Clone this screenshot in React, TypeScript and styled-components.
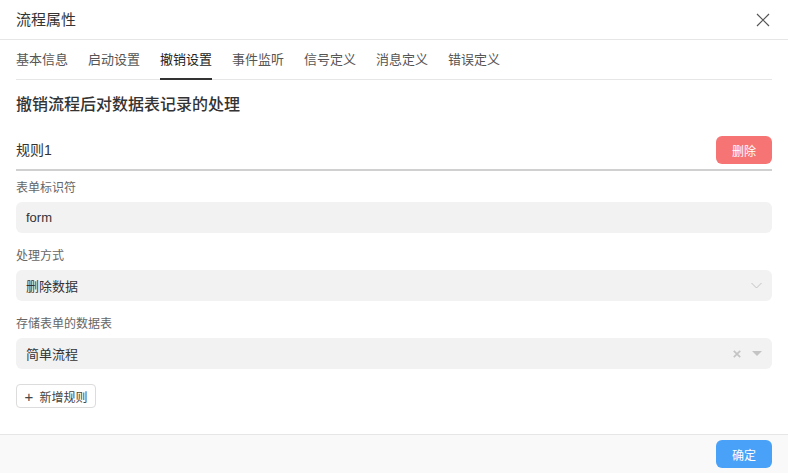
import React, { useState } from "react";
import styled, { createGlobalStyle } from "styled-components";

const GlobalStyle = createGlobalStyle`
  html, body {
    margin: 0;
    padding: 0;
    background: #ffffff;
  }
  body {
    font-family: "Liberation Sans", "Noto Sans CJK SC", sans-serif;
    color: #333333;
  }
`;

const TABS = ["基本信息", "启动设置", "撤销设置", "事件监听", "信号定义", "消息定义", "错误定义"];

const App = () => {
  const [active, setActive] = useState(2);

  return (
    <>
      <GlobalStyle />
      <Dialog>
        <Header>
          <Title>流程属性</Title>
          <CloseButton aria-label={"close"}>
            <svg width="14" height="14" viewBox="0 0 14 14">
              <path d="M1 1L13 13M13 1L1 13" stroke="#555" strokeWidth="1.2" fill="none" />
            </svg>
          </CloseButton>
        </Header>

        <TabBar>
          {TABS.map((label, index) => (
            <Tab key={label} $active={index === active} onClick={() => setActive(index)}>
              {label}
            </Tab>
          ))}
        </TabBar>

        <Body>
          <Heading>撤销流程后对数据表记录的处理</Heading>

          <RuleRow>
            <RuleName>规则1</RuleName>
            <Button $color={"#f67474"}>删除</Button>
          </RuleRow>

          <Field>
            <Label>表单标识符</Label>
            <InputBox>form</InputBox>
          </Field>

          <Field>
            <Label>处理方式</Label>
            <InputBox>
              删除数据
              <Suffix>
                <svg width="11" height="7" viewBox="0 0 11 7">
                  <path d="M0.5 1L5.5 6L10.5 1" stroke="#c2c2c2" strokeWidth="1" fill="none" />
                </svg>
              </Suffix>
            </InputBox>
          </Field>

          <Field>
            <Label>存储表单的数据表</Label>
            <InputBox>
              简单流程
              <Suffix $gap={11}>
                <svg width="8" height="8" viewBox="0 0 8 8">
                  <path d="M0.8 0.8L7.2 7.2M7.2 0.8L0.8 7.2" stroke="#c4c4c4" strokeWidth="1.7" fill="none" />
                </svg>
                <svg width="10" height="5" viewBox="0 0 10 5">
                  <path d="M0 0H10L5 5Z" fill="#c4c4c4" />
                </svg>
              </Suffix>
            </InputBox>
          </Field>

          <AddButton>
            <span>+</span>
            新增规则
          </AddButton>
        </Body>

        <Footer>
          <Button $color={"#4aa1f8"}>确定</Button>
        </Footer>
      </Dialog>
    </>
  );
};

export default App;

const Dialog = styled.div`
  width: 788px;
  height: 473px;
  display: flex;
  flex-direction: column;
  overflow: hidden;
`;

const Header = styled.div`
  height: 39px;
  padding: 0 16px;
  display: flex;
  align-items: center;
  justify-content: space-between;
  border-bottom: 1px solid #e6e6e6;
`;

const Title = styled.div`
  font-size: 15px;
  line-height: 22px;
  color: #333333;
`;

const CloseButton = styled.button`
  border: none;
  background: none;
  padding: 0;
  margin-right: 2px;
  display: flex;
  cursor: pointer;
`;

const TabBar = styled.div`
  margin: 0 16px;
  height: 40px;
  display: flex;
  gap: 20px;
  border-bottom: 1px solid #e6e6e6;
  box-sizing: border-box;
`;

const Tab = styled.div<{ $active: boolean }>`
  position: relative;
  display: flex;
  align-items: center;
  font-size: 13px;
  line-height: 20px;
  color: ${(p) => (p.$active ? "#222222" : "#555555")};
  cursor: pointer;

  &::after {
    content: "";
    position: absolute;
    left: 0;
    right: 0;
    bottom: -1px;
    height: 2px;
    background: ${(p) => (p.$active ? "#333333" : "transparent")};
  }
`;

const Body = styled.div`
  flex: 1;
  padding: 13px 16px 0;
  display: flex;
  flex-direction: column;
`;

const Heading = styled.div`
  font-size: 16px;
  line-height: 24px;
  font-weight: 500;
  color: #333333;
  margin-bottom: 19px;
`;

const RuleRow = styled.div`
  display: flex;
  align-items: center;
  justify-content: space-between;
  padding-bottom: 5px;
  border-bottom: 2px solid #d0d0d0;
  margin-bottom: 7px;
`;

const RuleName = styled.div`
  font-size: 14px;
  line-height: 20px;
  color: #333333;
`;

const Button = styled.button<{ $color: string }>`
  width: 56px;
  height: 28px;
  border: none;
  border-radius: 6px;
  background: ${(p) => p.$color};
  color: #ffffff;
  font-family: inherit;
  font-size: 12px;
  padding: 0;
  cursor: pointer;
`;

const Field = styled.div`
  display: flex;
  flex-direction: column;
  gap: 4px;
  margin-bottom: 13px;
`;

const Label = styled.div`
  font-size: 12px;
  line-height: 20px;
  color: #666666;
`;

const InputBox = styled.div`
  height: 31px;
  padding: 0 10px;
  border-radius: 6px;
  background: #f2f2f2;
  display: flex;
  align-items: center;
  justify-content: space-between;
  font-size: 13px;
  color: #333333;
`;

const Suffix = styled.div<{ $gap?: number }>`
  display: flex;
  align-items: center;
  gap: ${(p) => p.$gap ?? 0}px;
`;

const AddButton = styled.button`
  align-self: flex-start;
  margin-top: 2px;
  height: 24px;
  width: 80px;
  padding: 0;
  border: 1px solid #dcdcdc;
  border-radius: 4px;
  background: #ffffff;
  font-family: inherit;
  font-size: 12px;
  color: #444444;
  display: flex;
  align-items: center;
  justify-content: center;
  gap: 6px;
  cursor: pointer;

  span {
    font-size: 15px;
    line-height: 1;
  }
`;

const Footer = styled.div`
  height: 39px;
  padding: 0 16px;
  box-sizing: border-box;
  border-top: 1px solid #e6e6e6;
  background: #f9f9f9;
  display: flex;
  align-items: center;
  justify-content: flex-end;
`;
